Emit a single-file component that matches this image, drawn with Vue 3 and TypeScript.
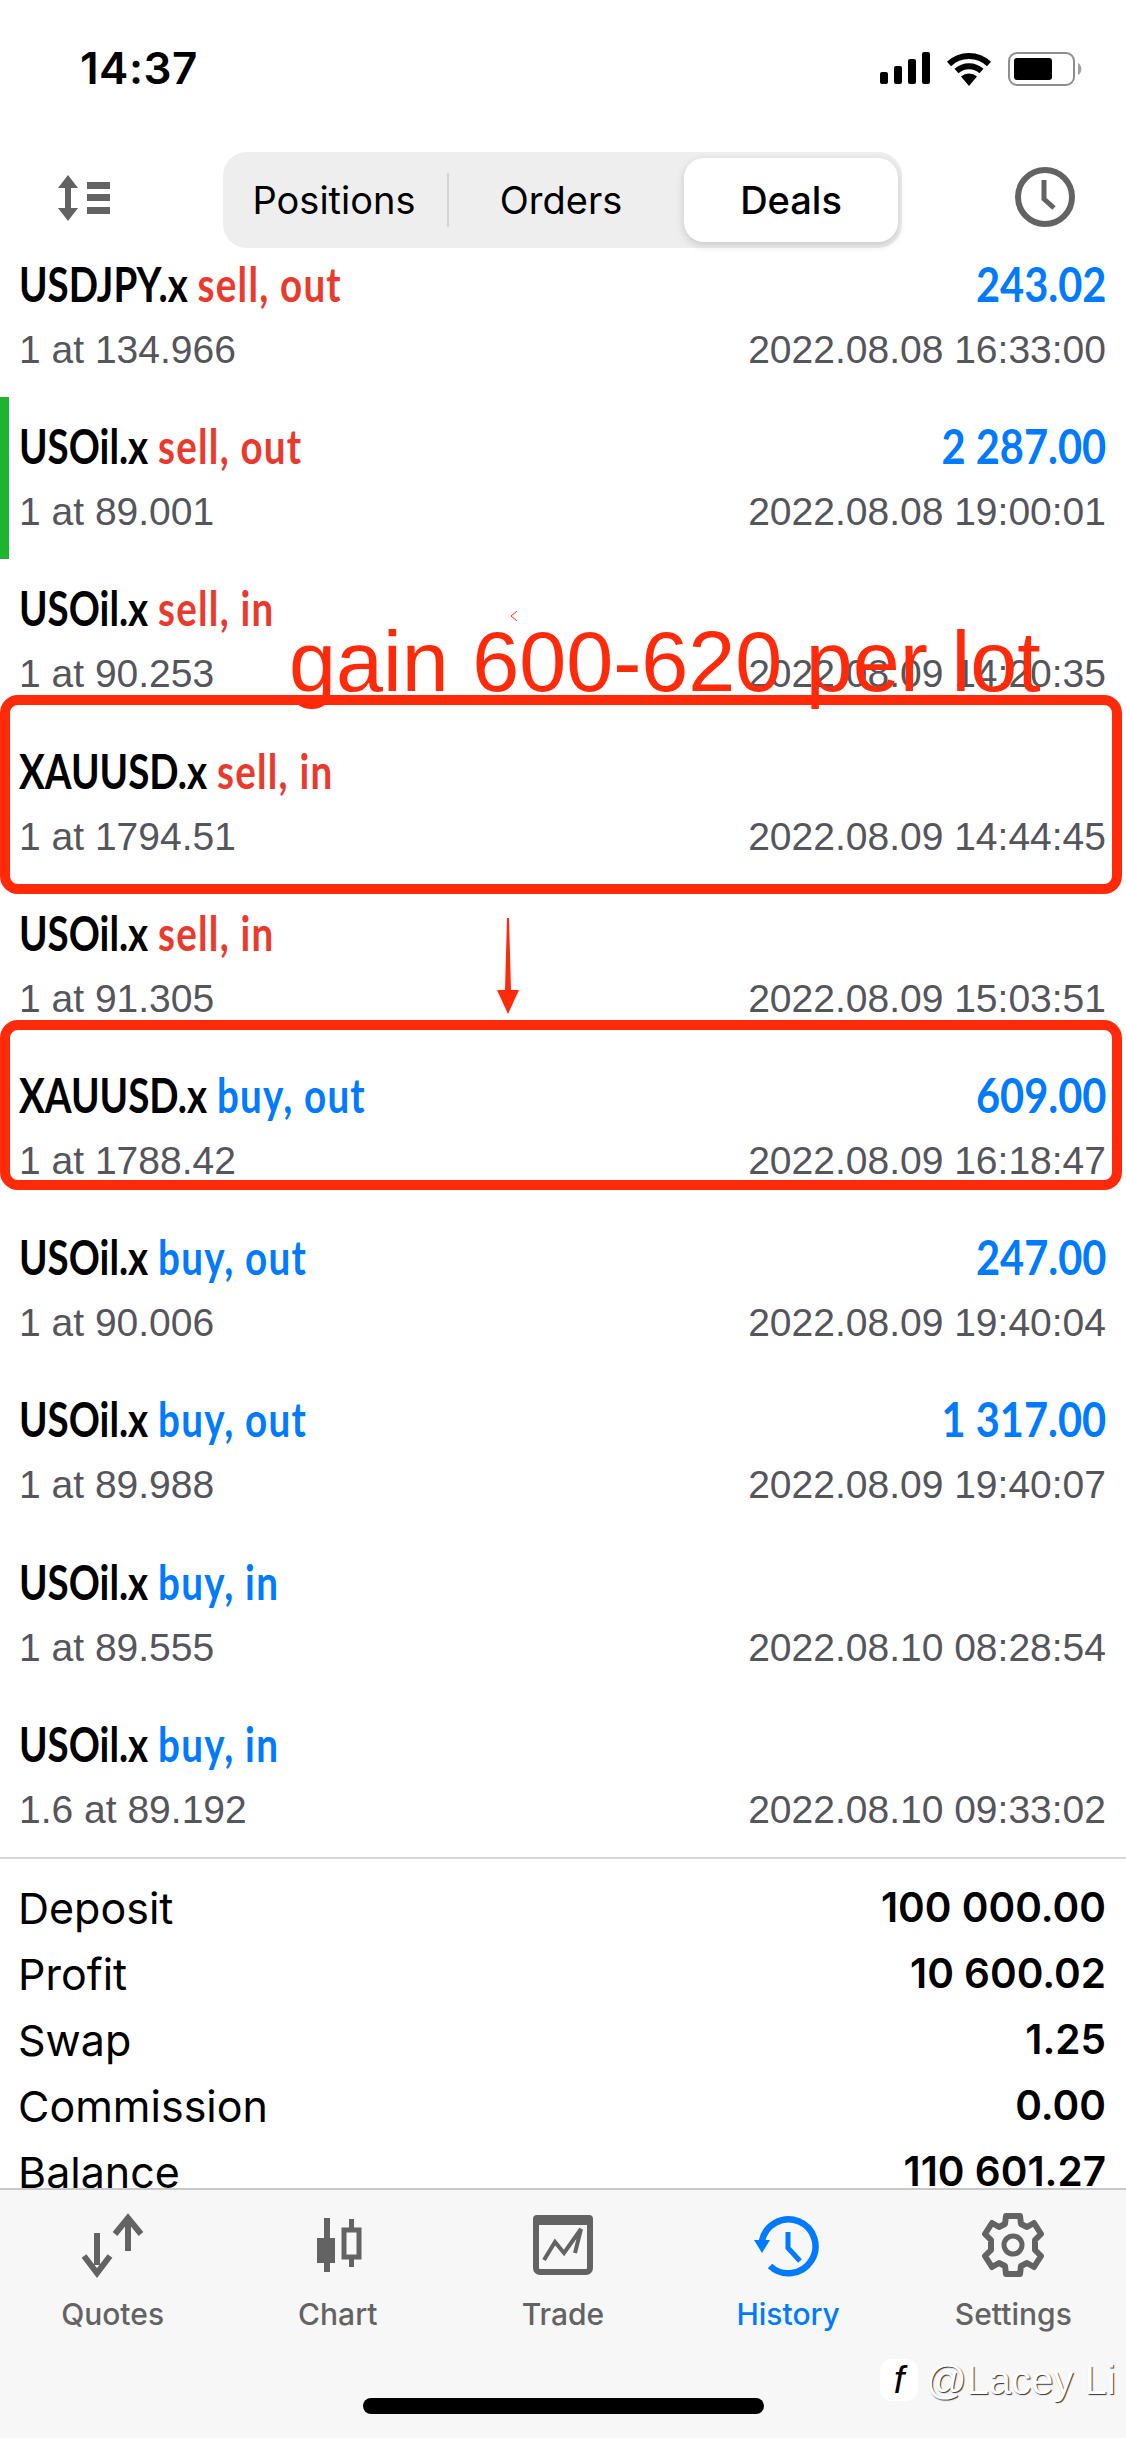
<template>
  <div class="screen">
    <header class="status-bar">
      <span class="clock-time">14:37</span>
      <div class="status-icons">
        <svg class="signal" width="50" height="32" viewBox="0 0 50 32">
          <rect x="0" y="20" width="8" height="12" rx="2" />
          <rect x="14" y="14" width="8" height="18" rx="2" />
          <rect x="28" y="7" width="8" height="25" rx="2" />
          <rect x="42" y="0" width="8" height="32" rx="2" />
        </svg>
        <svg class="wifi" width="46" height="34" viewBox="0 0 46 34">
          <path d="M23 34 L15 24.5 A12.5 12.5 0 0 1 31 24.5 Z" />
          <path d="M3 12 A29 29 0 0 1 43 12" fill="none" stroke="#000" stroke-width="6" />
          <path d="M10.5 19 A18.5 18.5 0 0 1 35.5 19" fill="none" stroke="#000" stroke-width="6" />
        </svg>
        <svg class="battery" width="74" height="34" viewBox="0 0 74 34">
          <rect x="1" y="1" width="65" height="32" rx="8" fill="none" stroke="#8e8e8e" stroke-width="2" />
          <rect x="6" y="6" width="38" height="22" rx="3" fill="#000" />
          <path d="M70 11 A7 7 0 0 1 70 23 Z" fill="#a0a0a0" />
        </svg>
      </div>
    </header>

    <div class="toolbar">
      <svg class="sort-icon" width="54" height="46" viewBox="0 0 54 46">
        <path d="M12 0 L22 13 H15 V33 H22 L12 46 L2 33 H9 V13 H2 Z" fill="#636363" />
        <rect x="31" y="7" width="23" height="7" fill="#636363" />
        <rect x="31" y="19" width="23" height="7" fill="#636363" />
        <rect x="31" y="32" width="23" height="7" fill="#636363" />
      </svg>
      <div class="segmented">
        <span class="seg seg-positions">Positions</span>
        <span class="seg-divider"></span>
        <span class="seg seg-orders">Orders</span>
        <span class="seg seg-active">Deals</span>
      </div>
      <svg class="history-icon" width="60" height="60" viewBox="0 0 60 60">
        <circle cx="30" cy="30" r="27" fill="none" stroke="#636363" stroke-width="6" />
        <path d="M29 13 V32 L39 41" fill="none" stroke="#636363" stroke-width="5" />
      </svg>
    </div>

    <main class="content">
      <div class="deal-list">
        <div v-for="deal in deals" :key="deal.time" class="deal">
          <span v-if="deal.marked" class="deal-mark"></span>
          <div class="deal-top">
            <div class="deal-title">
              <span class="symbol">{{ deal.symbol }}</span>
              <span :class="['action', deal.side]">{{ deal.action }}</span>
            </div>
            <span class="profit">{{ deal.profit }}</span>
          </div>
          <div class="deal-bottom">
            <span>{{ deal.price }}</span>
            <span>{{ deal.time }}</span>
          </div>
        </div>
      </div>

      <div class="summary">
        <div v-for="line in summary" :key="line.label" class="summary-line">
          <span>{{ line.label }}</span>
          <span class="summary-value">{{ line.value }}</span>
        </div>
      </div>
    </main>

    <nav class="tabbar">
      <div class="tab">
        <svg width="60" height="60" viewBox="0 0 60 60">
          <path d="M14 18 V50" stroke="#636363" stroke-width="6" fill="none" />
          <path d="M1 41 L14 58 L27 41" stroke="#636363" stroke-width="6" fill="none" />
          <path d="M45 36 V4" stroke="#636363" stroke-width="6" fill="none" />
          <path d="M32 19 L45 3 L58 19" stroke="#636363" stroke-width="6" fill="none" />
        </svg>
        <span>Quotes</span>
      </div>
      <div class="tab">
        <svg width="60" height="60" viewBox="0 0 60 60">
          <rect x="16" y="3" width="6" height="54" fill="#636363" />
          <rect x="9" y="23" width="18" height="25" fill="#636363" />
          <rect x="41" y="4" width="5" height="48" fill="#636363" />
          <rect x="36" y="15" width="15" height="27" fill="#f7f7f7" stroke="#636363" stroke-width="5" />
        </svg>
        <span>Chart</span>
      </div>
      <div class="tab">
        <svg width="60" height="60" viewBox="0 0 60 60">
          <rect x="3" y="3" width="54" height="54" rx="4" fill="none" stroke="#636363" stroke-width="6" />
          <rect x="0" y="0" width="60" height="10" rx="4" fill="#636363" />
          <path d="M11 45 L22 27 L31 38 L48 14 L42 38" fill="none" stroke="#636363" stroke-width="4" />
        </svg>
        <span>Trade</span>
      </div>
      <div class="tab tab-active">
        <svg width="66" height="60" viewBox="0 0 66 60">
          <path d="M7 26 A27 27 0 1 1 15 51" fill="none" stroke="#007aff" stroke-width="6.5" />
          <path d="M-1 25 H15 L7 38 Z" fill="#007aff" />
          <path d="M33 17 V33 L45 46" fill="none" stroke="#007aff" stroke-width="5" />
        </svg>
        <span>History</span>
      </div>
      <div class="tab">
        <svg width="60" height="60" viewBox="0 0 60 60">
          <path
            d="M23 1 H37 L38 9 L44 12 L51 8 L58 19 L52 25 V35 L58 41 L51 52 L44 48 L38 51 L37 59 H23 L22 51 L16 48 L9 52 L2 41 L8 35 V25 L2 19 L9 8 L16 12 L22 9 Z"
            fill="none"
            stroke="#636363"
            stroke-width="6"
            stroke-linejoin="round"
          />
          <circle cx="30" cy="30" r="9" fill="none" stroke="#636363" stroke-width="5" />
        </svg>
        <span>Settings</span>
      </div>
      <span class="home-indicator"></span>
      <div class="watermark">
        <span class="watermark-logo">f</span>
        <span>@Lacey Li</span>
      </div>
    </nav>

    <!-- hand drawn notes on top of the screenshot -->
    <span class="note-text">gain 600-620 per lot</span>
    <span class="note-box note-box-sell"></span>
    <span class="note-box note-box-buy"></span>
    <svg class="note-arrow" width="24" height="96" viewBox="0 0 24 96">
      <path d="M11 0 H13 L15 72 H23 L12 96 L1 72 H9 Z" fill="#ff2a0a" />
    </svg>
    <svg class="note-tick" width="8" height="10" viewBox="0 0 8 10">
      <path d="M7 0 L1 5 L7 10" fill="none" stroke="#ff2a0a" stroke-width="1" />
    </svg>
  </div>
</template>

<script setup lang="ts">
interface Deal {
  symbol: string
  action: string
  side: 'sell' | 'buy'
  profit?: string
  price: string
  time: string
  marked?: boolean
}

const deals: Deal[] = [
  { symbol: 'USDJPY.x', action: 'sell, out', side: 'sell', profit: '243.02', price: '1 at 134.966', time: '2022.08.08 16:33:00' },
  { symbol: 'USOil.x', action: 'sell, out', side: 'sell', profit: '2 287.00', price: '1 at 89.001', time: '2022.08.08 19:00:01', marked: true },
  { symbol: 'USOil.x', action: 'sell, in', side: 'sell', price: '1 at 90.253', time: '2022.08.09 14:20:35' },
  { symbol: 'XAUUSD.x', action: 'sell, in', side: 'sell', price: '1 at 1794.51', time: '2022.08.09 14:44:45' },
  { symbol: 'USOil.x', action: 'sell, in', side: 'sell', price: '1 at 91.305', time: '2022.08.09 15:03:51' },
  { symbol: 'XAUUSD.x', action: 'buy, out', side: 'buy', profit: '609.00', price: '1 at 1788.42', time: '2022.08.09 16:18:47' },
  { symbol: 'USOil.x', action: 'buy, out', side: 'buy', profit: '247.00', price: '1 at 90.006', time: '2022.08.09 19:40:04' },
  { symbol: 'USOil.x', action: 'buy, out', side: 'buy', profit: '1 317.00', price: '1 at 89.988', time: '2022.08.09 19:40:07' },
  { symbol: 'USOil.x', action: 'buy, in', side: 'buy', price: '1 at 89.555', time: '2022.08.10 08:28:54' },
  { symbol: 'USOil.x', action: 'buy, in', side: 'buy', price: '1.6 at 89.192', time: '2022.08.10 09:33:02' }
]

const summary = [
  { label: 'Deposit', value: '100 000.00' },
  { label: 'Profit', value: '10 600.02' },
  { label: 'Swap', value: '1.25' },
  { label: 'Commission', value: '0.00' },
  { label: 'Balance', value: '110 601.27' }
]
</script>

<style>
html,
body {
  margin: 0;
  background: #fff;
}
</style>

<style scoped>
.screen {
  position: relative;
  width: 1126px;
  height: 2438px;
  display: flex;
  flex-direction: column;
  overflow: hidden;
  background: #fff;
  color: #000;
  font-family: "Liberation Sans", Arial, sans-serif;
}

.status-bar {
  height: 152px;
  flex: none;
  box-sizing: border-box;
  padding: 50px 44px 0 80px;
  display: flex;
  justify-content: space-between;
  align-items: flex-start;
}

.clock-time {
  font-family: Inter, sans-serif;
  font-size: 44px;
  font-weight: 600;
  line-height: 36px;
  letter-spacing: 0.5px;
}

.status-icons {
  display: flex;
  align-items: flex-start;
  gap: 16px;
  padding-top: 2px;
}

.status-icons svg {
  display: block;
}

.toolbar {
  position: relative;
  z-index: 1;
  height: 96px;
  flex: none;
  background: #fff;
  display: flex;
  align-items: flex-start;
}

.sort-icon {
  margin: 23px 0 0 56px;
}

.segmented {
  margin-left: 113px;
  width: 679px;
  height: 96px;
  box-sizing: border-box;
  padding: 6px 4px 6px 0;
  border-radius: 24px;
  background: #eeeeef;
  display: flex;
  align-items: center;
  font-family: Inter, sans-serif;
  font-size: 38px;
}

.seg {
  text-align: center;
}

.seg-positions {
  width: 222px;
}

.seg-divider {
  width: 2px;
  height: 54px;
  margin-left: 2px;
  background: #d4d4d4;
}

.seg-orders {
  width: 224px;
}

.seg-active {
  margin-left: 11px;
  width: 214px;
  height: 84px;
  line-height: 84px;
  border-radius: 20px;
  background: #fff;
  box-shadow: 0 3px 8px rgba(0, 0, 0, 0.16);
  font-weight: 500;
}

.history-icon {
  margin: 15px 0 0 113px;
}

.content {
  flex: 1;
  min-height: 0;
  overflow: hidden;
}

.deal-list {
  margin-top: -13px;
}

.deal {
  position: relative;
  height: 162.2px;
  box-sizing: border-box;
  padding: 22px 20px 0 19px;
}

.deal-mark {
  position: absolute;
  left: 0;
  top: 0;
  bottom: 0;
  width: 9px;
  background: #1db52e;
}

.deal-top {
  display: flex;
  justify-content: space-between;
  align-items: baseline;
  height: 54px;
  line-height: 54px;
  font-family: Lato, "Liberation Sans", sans-serif;
  font-size: 47px;
  font-weight: 700;
}

/* no condensed family is installed, so squeeze the bold one */
.deal-title {
  display: flex;
  white-space: nowrap;
  transform: scaleX(0.82);
  transform-origin: left center;
}

.action {
  margin-left: 12px;
  letter-spacing: 1.5px;
}

.action.sell {
  color: #ea3a2e;
}

.action.buy {
  color: #007aff;
}

.profit {
  color: #007aff;
  transform: scaleX(0.885);
  transform-origin: right center;
}

.deal-bottom {
  margin-top: 17px;
  display: flex;
  justify-content: space-between;
  font-size: 39px;
  line-height: 44px;
  color: #55555c;
}

.summary {
  border-top: 2px solid #d8d8d8;
  padding: 16px 20px 0 18px;
}

.summary-line {
  height: 66px;
  line-height: 66px;
  display: flex;
  justify-content: space-between;
  font-family: Inter, sans-serif;
  font-size: 43px;
}

.summary-value {
  font-size: 40.5px;
  font-weight: 600;
}

.tabbar {
  position: relative;
  height: 250px;
  flex: none;
  box-sizing: border-box;
  border-top: 2px solid #c8c8c8;
  background: #f7f7f7;
  display: flex;
  padding-top: 25px;
}

.tab {
  width: 225.2px;
  display: flex;
  flex-direction: column;
  align-items: center;
  gap: 20px;
  font-family: Inter, sans-serif;
  font-size: 30px;
  font-weight: 500;
  line-height: 38px;
  color: #636363;
}

.tab svg {
  overflow: visible;
}

.tab-active {
  color: #007aff;
}

.home-indicator {
  position: absolute;
  left: 363px;
  top: 208px;
  width: 401px;
  height: 16px;
  border-radius: 8px;
  background: #000;
}

.watermark {
  position: absolute;
  left: 880px;
  top: 167px;
  display: flex;
  align-items: center;
  gap: 8px;
  font-size: 40px;
  line-height: 46px;
  white-space: nowrap;
  color: #fff;
  text-shadow: 1px 1px 1px rgba(0, 0, 0, 0.8);
}

.watermark-logo {
  width: 38px;
  height: 42px;
  border-radius: 12px;
  background: #fff;
  color: #000;
  text-align: center;
  font-style: italic;
  font-size: 38px;
  line-height: 42px;
  text-shadow: none;
}

.note-text {
  position: absolute;
  left: 289px;
  top: 620px;
  font-size: 84.5px;
  line-height: 84px;
  white-space: nowrap;
  color: #ff2a0a;
}

.note-box {
  position: absolute;
  left: 0;
  width: 1122px;
  box-sizing: border-box;
  border: 10px solid #ff2a0a;
  border-radius: 18px;
}

.note-box-sell {
  top: 695px;
  height: 199px;
}

.note-box-buy {
  top: 1020px;
  height: 170px;
}

.note-arrow {
  position: absolute;
  left: 496px;
  top: 918px;
}

.note-tick {
  position: absolute;
  left: 510px;
  top: 611px;
}
</style>
